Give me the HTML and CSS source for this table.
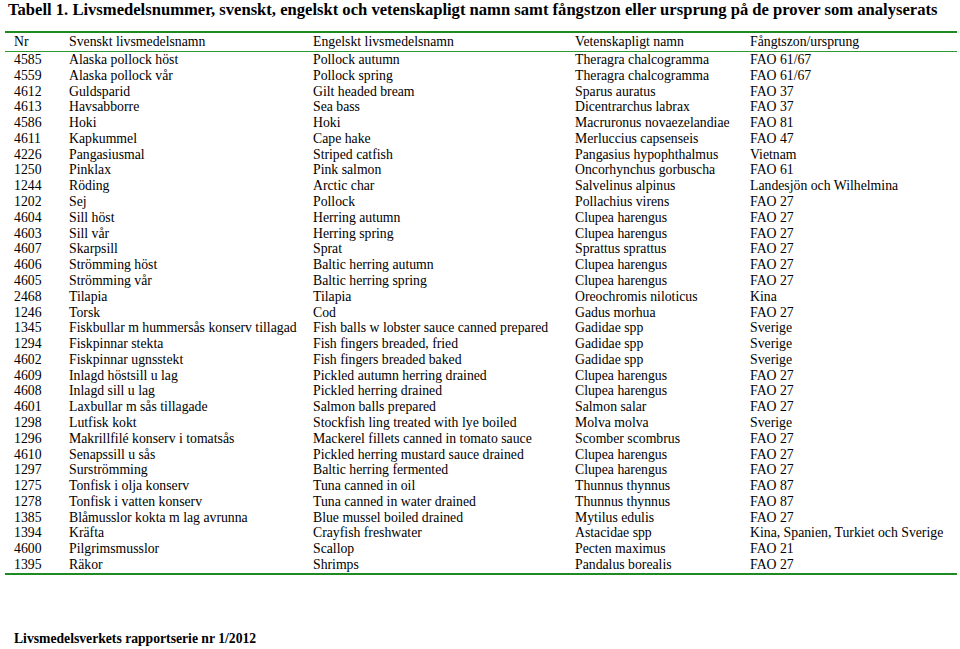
FILE: index.html
```html
<!DOCTYPE html>
<html lang="sv">
<head>
<meta charset="utf-8">
<title>Tabell 1</title>
<link rel="stylesheet" href="styles.css">
</head>
<body>
<div class="page">
<h1 class="title">Tabell 1. Livsmedelsnummer, svenskt, engelskt och vetenskapligt namn samt fångstzon eller ursprung på de prover som analyserats</h1>
<table class="data">
<thead>
<tr><th class="c1">Nr</th><th class="c2">Svenskt livsmedelsnamn</th><th class="c3">Engelskt livsmedelsnamn</th><th class="c4">Vetenskapligt namn</th><th class="c5">Fångtszon/ursprung</th></tr>
</thead>
<tbody>
<tr><td>4585</td><td>Alaska pollock höst</td><td>Pollock autumn</td><td>Theragra chalcogramma</td><td>FAO 61/67</td></tr>
<tr><td>4559</td><td>Alaska pollock vår</td><td>Pollock spring</td><td>Theragra chalcogramma</td><td>FAO 61/67</td></tr>
<tr><td>4612</td><td>Guldsparid</td><td>Gilt headed bream</td><td>Sparus auratus</td><td>FAO 37</td></tr>
<tr><td>4613</td><td>Havsabborre</td><td>Sea bass</td><td>Dicentrarchus labrax</td><td>FAO 37</td></tr>
<tr><td>4586</td><td>Hoki</td><td>Hoki</td><td>Macruronus novaezelandiae</td><td>FAO 81</td></tr>
<tr><td>4611</td><td>Kapkummel</td><td>Cape hake</td><td>Merluccius capsenseis</td><td>FAO 47</td></tr>
<tr><td>4226</td><td>Pangasiusmal</td><td>Striped catfish</td><td>Pangasius hypophthalmus</td><td>Vietnam</td></tr>
<tr><td>1250</td><td>Pinklax</td><td>Pink salmon</td><td>Oncorhynchus gorbuscha</td><td>FAO 61</td></tr>
<tr><td>1244</td><td>Röding</td><td>Arctic char</td><td>Salvelinus alpinus</td><td>Landesjön och Wilhelmina</td></tr>
<tr><td>1202</td><td>Sej</td><td>Pollock</td><td>Pollachius virens</td><td>FAO 27</td></tr>
<tr><td>4604</td><td>Sill höst</td><td>Herring autumn</td><td>Clupea harengus</td><td>FAO 27</td></tr>
<tr><td>4603</td><td>Sill vår</td><td>Herring spring</td><td>Clupea harengus</td><td>FAO 27</td></tr>
<tr><td>4607</td><td>Skarpsill</td><td>Sprat</td><td>Sprattus sprattus</td><td>FAO 27</td></tr>
<tr><td>4606</td><td>Strömming höst</td><td>Baltic herring autumn</td><td>Clupea harengus</td><td>FAO 27</td></tr>
<tr><td>4605</td><td>Strömming vår</td><td>Baltic herring spring</td><td>Clupea harengus</td><td>FAO 27</td></tr>
<tr><td>2468</td><td>Tilapia</td><td>Tilapia</td><td>Oreochromis niloticus</td><td>Kina</td></tr>
<tr><td>1246</td><td>Torsk</td><td>Cod</td><td>Gadus morhua</td><td>FAO 27</td></tr>
<tr><td>1345</td><td>Fiskbullar m hummersås konserv tillagad</td><td>Fish balls w lobster sauce canned prepared</td><td>Gadidae spp</td><td>Sverige</td></tr>
<tr><td>1294</td><td>Fiskpinnar stekta</td><td>Fish fingers breaded, fried</td><td>Gadidae spp</td><td>Sverige</td></tr>
<tr><td>4602</td><td>Fiskpinnar ugnsstekt</td><td>Fish fingers breaded baked</td><td>Gadidae spp</td><td>Sverige</td></tr>
<tr><td>4609</td><td>Inlagd höstsill u lag</td><td>Pickled autumn herring drained</td><td>Clupea harengus</td><td>FAO 27</td></tr>
<tr><td>4608</td><td>Inlagd sill u lag</td><td>Pickled herring drained</td><td>Clupea harengus</td><td>FAO 27</td></tr>
<tr><td>4601</td><td>Laxbullar m sås tillagade</td><td>Salmon balls prepared</td><td>Salmon salar</td><td>FAO 27</td></tr>
<tr><td>1298</td><td>Lutfisk kokt</td><td>Stockfish ling treated with lye boiled</td><td>Molva molva</td><td>Sverige</td></tr>
<tr><td>1296</td><td>Makrillfilé konserv i tomatsås</td><td>Mackerel fillets canned in tomato sauce</td><td>Scomber scombrus</td><td>FAO 27</td></tr>
<tr><td>4610</td><td>Senapssill u sås</td><td>Pickled herring mustard sauce drained</td><td>Clupea harengus</td><td>FAO 27</td></tr>
<tr><td>1297</td><td>Surströmming</td><td>Baltic herring fermented</td><td>Clupea harengus</td><td>FAO 27</td></tr>
<tr><td>1275</td><td>Tonfisk i olja konserv</td><td>Tuna canned in oil</td><td>Thunnus thynnus</td><td>FAO 87</td></tr>
<tr><td>1278</td><td>Tonfisk i vatten konserv</td><td>Tuna canned in water drained</td><td>Thunnus thynnus</td><td>FAO 87</td></tr>
<tr><td>1385</td><td>Blåmusslor kokta m lag avrunna</td><td>Blue mussel boiled drained</td><td>Mytilus edulis</td><td>FAO 27</td></tr>
<tr><td>1394</td><td>Kräfta</td><td>Crayfish freshwater</td><td>Astacidae spp</td><td>Kina, Spanien, Turkiet och Sverige</td></tr>
<tr><td>4600</td><td>Pilgrimsmusslor</td><td>Scallop</td><td>Pecten maximus</td><td>FAO 21</td></tr>
<tr><td>1395</td><td>Räkor</td><td>Shrimps</td><td>Pandalus borealis</td><td>FAO 27</td></tr>
</tbody>
</table>
<p class="footer">Livsmedelsverkets rapportserie nr 1/2012</p>
</div>
</body>
</html>
```

FILE: styles.css
```css
html, body {
  margin: 0;
  padding: 0;
  background: #ffffff;
}
body {
  font-family: "Liberation Serif", "Times New Roman", serif;
  color: #000000;
}
.page {
  width: 960px;
  height: 649px;
  position: relative;
  overflow: hidden;
}
.title {
  margin: 0;
  padding: 0 0 0 8px;
  font-size: 16.6px;
  font-weight: bold;
  line-height: 20px;
  white-space: nowrap;
}
.data {
  margin: 11px 0 0 5px;
  width: 952px;
  border-collapse: collapse;
  table-layout: fixed;
  font-size: 13.75px;
}
.data th, .data td {
  padding: 0;
  text-align: left;
  font-weight: normal;
  white-space: nowrap;
  line-height: 15.78px;
  height: 15.78px;
  vertical-align: middle;
}
.data thead tr {
  border-top: 2px solid #1e8a22;
  border-bottom: 1.5px solid #2e9a32;
}
.data thead th {
  height: 18px;
  line-height: 18px;
}
.data tbody tr:last-child {
  border-bottom: 2px solid #1e8a22;
}
.c1 { width: 55px; }
.c2 { width: 244px; }
.c3 { width: 262px; }
.c4 { width: 175px; }
.c5 { width: 207px; }
.data th:first-child, .data td:first-child {
  padding-left: 9px;
}
.footer {
  margin: 0;
  position: absolute;
  left: 14px;
  top: 631px;
  font-size: 13.66px;
  font-weight: bold;
  line-height: 16px;
}
```
